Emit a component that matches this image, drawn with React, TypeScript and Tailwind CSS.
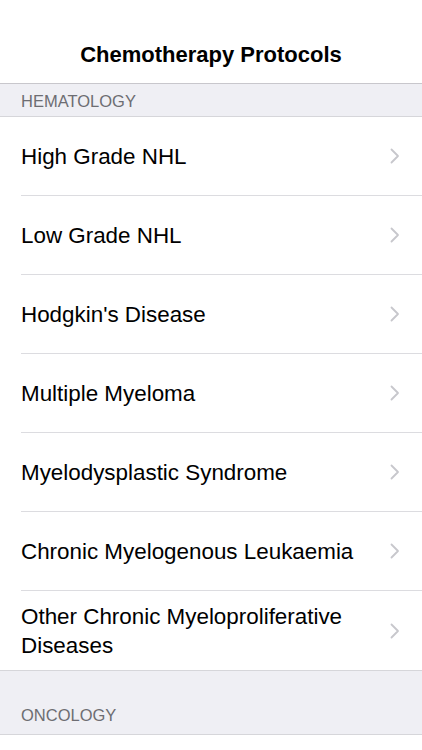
const hematology = [
  'High Grade NHL',
  'Low Grade NHL',
  "Hodgkin's Disease",
  'Multiple Myeloma',
  'Myelodysplastic Syndrome',
  'Chronic Myelogenous Leukaemia',
  'Other Chronic Myeloproliferative Diseases',
]

function Chevron() {
  return (
    <svg width="10" height="16" viewBox="0 0 10 16" fill="none" className="shrink-0">
      <path d="M1.5 1.5 L8 8 L1.5 14.5" stroke="#c7c7cc" strokeWidth="1.8" strokeLinecap="round" strokeLinejoin="round" />
    </svg>
  )
}

export default function App() {
  return (
    <div className="w-[422px] h-[750px] overflow-hidden bg-white font-['Liberation_Sans',Arial,sans-serif] text-black">
      <div className="h-[84px] flex items-end justify-center pb-[17px] border-b border-[#c8c7cc]">
        <h1 className="text-[22px] font-bold leading-none">Chemotherapy Protocols</h1>
      </div>

      <div className="h-[33px] bg-[#efeff4] border-b border-[#d6d6da] flex items-center px-[21px] pt-[2px]">
        <span className="text-[16.5px] text-[#6d6d72] leading-none">HEMATOLOGY</span>
      </div>

      <ul>
        {hematology.map((name, i) => (
          <li key={name} className="pl-[21px]">
            <div className={`h-[79px] flex items-center pr-[22px] ${i < hematology.length - 1 ? 'border-b border-[#dcdce0]' : ''}`}>
              <span className="flex-1 text-[22.4px] leading-[29px] pr-8">{name}</span>
              <Chevron />
            </div>
          </li>
        ))}
      </ul>

      <div className="h-[65px] bg-[#efeff4] border-y border-[#d6d6da] flex items-end px-[21px] pb-[11px]">
        <span className="text-[16.5px] text-[#6d6d72] leading-none">ONCOLOGY</span>
      </div>
    </div>
  )
}
